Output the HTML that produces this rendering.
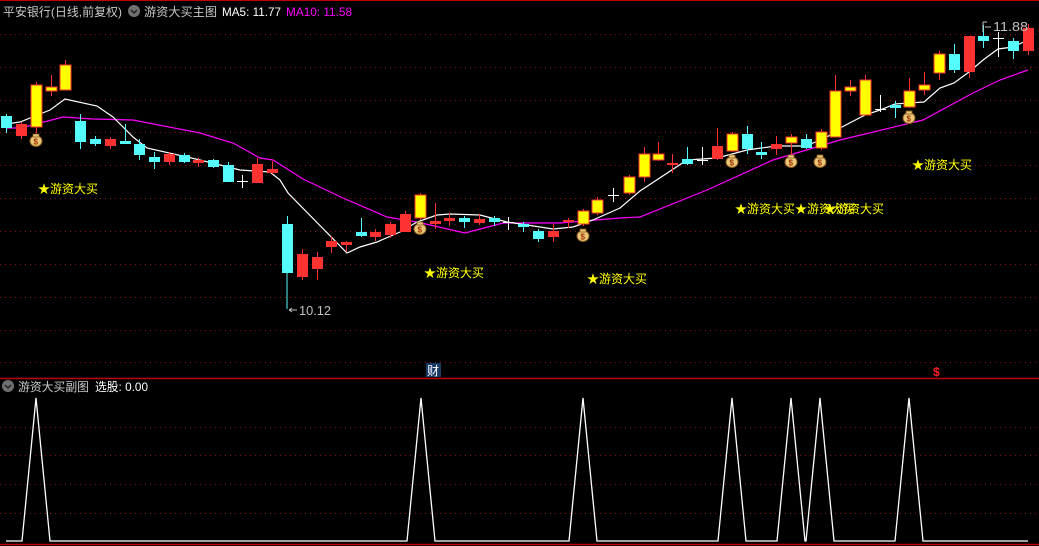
<!DOCTYPE html>
<html><head><meta charset="utf-8">
<style>
html,body{margin:0;padding:0;background:#000;width:1039px;height:546px;overflow:hidden}
svg{display:block}
text{font-family:"Liberation Sans","Noto Sans CJK SC",sans-serif}
</style></head><body>
<svg id="s" width="1039" height="546" xmlns="http://www.w3.org/2000/svg">
<rect width="1039" height="546" fill="#000"/>
<line x1="0" y1="0.5" x2="1039" y2="0.5" stroke="#c00000" stroke-width="1"/>
<g stroke="#8a1010" stroke-width="1" stroke-dasharray="1 4">
<line x1="0" y1="34.5" x2="1039" y2="34.5"/><line x1="0" y1="67.5" x2="1039" y2="67.5"/>
<line x1="0" y1="100.5" x2="1039" y2="100.5"/><line x1="0" y1="132.5" x2="1039" y2="132.5"/>
<line x1="0" y1="165.5" x2="1039" y2="165.5"/><line x1="0" y1="198.5" x2="1039" y2="198.5"/>
<line x1="0" y1="231.5" x2="1039" y2="231.5"/><line x1="0" y1="264.5" x2="1039" y2="264.5"/>
<line x1="0" y1="297.5" x2="1039" y2="297.5"/><line x1="0" y1="330.5" x2="1039" y2="330.5"/>
<line x1="0" y1="362.5" x2="1039" y2="362.5"/>
<line x1="0" y1="427.5" x2="1039" y2="427.5"/><line x1="0" y1="455.5" x2="1039" y2="455.5"/>
<line x1="0" y1="484.5" x2="1039" y2="484.5"/><line x1="0" y1="513.5" x2="1039" y2="513.5"/>
</g>
<line x1="0" y1="378.5" x2="1039" y2="378.5" stroke="#c00000" stroke-width="1.5"/>
<line x1="0" y1="544.5" x2="1039" y2="544.5" stroke="#c00000" stroke-width="1.5"/>
<g id="lines"></g>
<g id="cs"></g>
<g id="bags"></g>
<!-- header -->
<text x="3" y="16" fill="#c8c8c8" font-size="12" textLength="119" lengthAdjust="spacingAndGlyphs">平安银行(日线,前复权)</text>
<circle cx="134" cy="11" r="6" fill="#707070"/><path d="M131 10 l3 3 l3 -3" stroke="#222" stroke-width="1.5" fill="none"/>
<text x="144" y="16" fill="#c8c8c8" font-size="12" textLength="73" lengthAdjust="spacingAndGlyphs">游资大买主图</text>
<text x="222" y="16" fill="#ffffff" font-size="12" textLength="59" lengthAdjust="spacingAndGlyphs">MA5: 11.77</text>
<text x="286" y="16" fill="#ff00ff" font-size="12" textLength="66" lengthAdjust="spacingAndGlyphs">MA10: 11.58</text>
<circle cx="8" cy="386" r="6" fill="#707070"/><path d="M5 385 l3 3 l3 -3" stroke="#222" stroke-width="1.5" fill="none"/>
<text x="18" y="391" fill="#c8c8c8" font-size="12" textLength="71" lengthAdjust="spacingAndGlyphs">游资大买副图</text>
<text x="95" y="391" fill="#ffffff" font-size="12" textLength="53" lengthAdjust="spacingAndGlyphs">选股: 0.00</text>
<!-- labels -->
<g fill="#ffff00" font-size="12">
<text x="38" y="193" textLength="60" lengthAdjust="spacingAndGlyphs">★游资大买</text>
<text x="424" y="277" textLength="60" lengthAdjust="spacingAndGlyphs">★游资大买</text>
<text x="587" y="283" textLength="60" lengthAdjust="spacingAndGlyphs">★游资大买</text>
<text x="735" y="213" textLength="60" lengthAdjust="spacingAndGlyphs">★游资大买</text>
<text x="795" y="213" textLength="60" lengthAdjust="spacingAndGlyphs">★游资大买</text>
<text x="824" y="213" textLength="60" lengthAdjust="spacingAndGlyphs">★游资大买</text>
<text x="912" y="169" textLength="60" lengthAdjust="spacingAndGlyphs">★游资大买</text>
</g>
<path d="M287 265 V309" stroke="#54fcfc"/>
<path d="M289 310 H297 M289 310 l3 -2 M289 310 l3 2" stroke="#c0c0c0" fill="none"/>
<text x="299" y="315" fill="#c0c0c0" font-size="13" textLength="32" lengthAdjust="spacingAndGlyphs">10.12</text>
<path d="M983 22 V32 M983 22 H987 M985 27 H991" stroke="#c0c0c0" fill="none"/>
<text x="993" y="31" fill="#c0c0c0" font-size="13" textLength="35" lengthAdjust="spacingAndGlyphs">11.88</text>
<rect x="426" y="363" width="15" height="14" fill="#1a3a66"/>
<text x="427" y="375" fill="#fff" font-size="12">财</text>
<text x="933" y="376" fill="#ff2020" font-size="12" font-weight="bold">$</text>
<polyline fill="none" stroke="#fff" stroke-width="1.3" points="6,541 22,541 36,398 50,541 407,541 421,398 435,541 569,541 583,398 597,541 718,541 732,398 746,541 777,541 791,398 805,541 806,541 820,398 834,541 895,541 909,398 923,541 1028,541"/>
</svg>
<script>
var NS="http://www.w3.org/2000/svg";
function el(p,t,a){var e=document.createElementNS(NS,t);for(var k in a)e.setAttribute(k,a[k]);document.getElementById(p).appendChild(e);return e;}
var C=[[6,116,128,114,133,'c'],[21,124,136,122,139,'r'],[36,85,127,82,133,'y'],[51,87,91,75,96,'y'],[65,65,90,60,90,'y'],
[80,121,142,114,149,'c'],[95,139,144,136,146,'c'],[110,139,146,137,149,'r'],[125,141,144,124,144,'c'],[139,144,155,139,160,'c'],
[154,157,162,152,169,'c'],[169,154,162,152,165,'r'],[184,155,162,153,163,'c'],[198,160,163,158,167,'r'],[213,160,167,159,168,'c'],
[228,165,182,162,182,'c'],[242,181,181,175,188,'x'],[257,164,183,158,183,'r'],[272,169,173,161,174,'r'],[287,224,273,216,273,'c'],
[302,254,277,249,280,'r'],[317,257,269,252,280,'r'],[331,241,247,236,253,'r'],[346,242,245,241,252,'r'],[361,232,236,218,237,'c'],
[375,232,237,229,241,'r'],[390,224,235,222,238,'r'],[405,214,232,211,232,'r'],[420,195,218,193,220,'y'],[435,221,224,203,229,'r'],
[449,218,221,213,226,'r'],[464,218,222,216,228,'c'],[479,219,223,214,225,'r'],[494,218,222,216,226,'c'],[508,222,222,217,230,'x'],
[523,224,227,222,232,'c'],[538,231,239,229,242,'c'],[553,231,237,224,242,'r'],[568,220,222,218,228,'r'],[583,211,224,209,226,'y'],
[597,200,213,197,215,'y'],[613,195,195,188,202,'x'],[629,177,193,175,195,'y'],[644,154,177,147,182,'y'],[658,154,160,142,161,'y'],
[672,163,163,154,173,'r'],[687,159,164,147,165,'c'],[702,160,160,147,165,'x'],[717,146,159,128,160,'r'],[732,134,151,132,152,'y'],
[747,134,149,126,154,'c'],[761,152,155,142,159,'c'],[776,144,149,136,155,'r'],[791,137,143,134,155,'y'],[806,139,148,134,149,'c'],
[821,132,148,129,150,'y'],[835,91,137,75,137,'y'],[850,87,91,80,96,'y'],[865,80,115,75,115,'y'],[880,109,109,95,112,'x'],
[895,105,108,101,118,'c'],[909,91,107,78,108,'y'],[924,85,90,72,95,'y'],[939,54,73,51,80,'y'],[954,54,70,44,73,'c'],
[969,36,72,36,78,'r'],[983,36,41,25,48,'c'],[998,38,38,32,57,'x'],[1013,41,51,38,59,'c'],[1028,28,51,24,55,'r']];
var col={c:'#54fcfc',r:'#ff3232',y:'#ffff00',x:'#ffffff'};
C.forEach(function(d){var x=d[0],t=d[1],b=d[2],c=col[d[5]];var wc=d[5]=='y'?'#ff3232':c;
el('cs','line',{x1:x+.5,y1:d[3],x2:x+.5,y2:d[4],stroke:wc});
if(d[5]=='x'){el('cs','line',{x1:x-5,y1:t+.5,x2:x+6,y2:t+.5,stroke:'#fff'});return;}
el('cs','rect',{x:x-5,y:t,width:11,height:Math.max(b-t,2),fill:c,stroke:d[5]=='y'?'#ff3232':'none','stroke-width':1});});
el('lines','polyline',{fill:'none',stroke:'#ff00ff','stroke-width':1.2,points:"6,128 21,128 63,117 93,119 133,120 200,133 233,143 260,158 273,160 303,179 343,198 387,217 417,222 465,233 503,223 560,223 620,218 640,217 707,190 773,160 840,140 923,120 973,93 1000,80 1028,70"});
el('lines','polyline',{fill:'none',stroke:'#ffffff','stroke-width':1.2,points:"6,124 20,122 50,110 65,99 97,106 113,117 133,137 147,148 200,160 240,170 270,172 280,180 288,193 347,253 360,247 377,242 400,232 417,222 437,215 450,214 480,215 507,222 527,225 553,229 573,227 593,220 620,208 640,191 687,160 717,158 747,150 776,146 806,146 827,137 840,128 865,115 880,110 895,104 909,103 924,102 940,88 954,83 969,72 983,60 998,49 1013,47 1028,40"});
[[36,140],[420,228],[583,235],[732,161],[791,161],[820,161],[909,117]].forEach(function(p){
el('bags','ellipse',{cx:p[0],cy:p[1]+1,rx:6,ry:5.5,fill:'#e8c878',stroke:'#8a5a20'});
el('bags','rect',{x:p[0]-3,y:p[1]-6,width:6,height:3,fill:'#e8c878',stroke:'#8a5a20','stroke-width':.8});
var t=el('bags','text',{x:p[0]-2.5,y:p[1]+4.5,fill:'#a03000','font-size':8,'font-weight':'bold'});t.textContent='$';});
</script>
</body></html>
